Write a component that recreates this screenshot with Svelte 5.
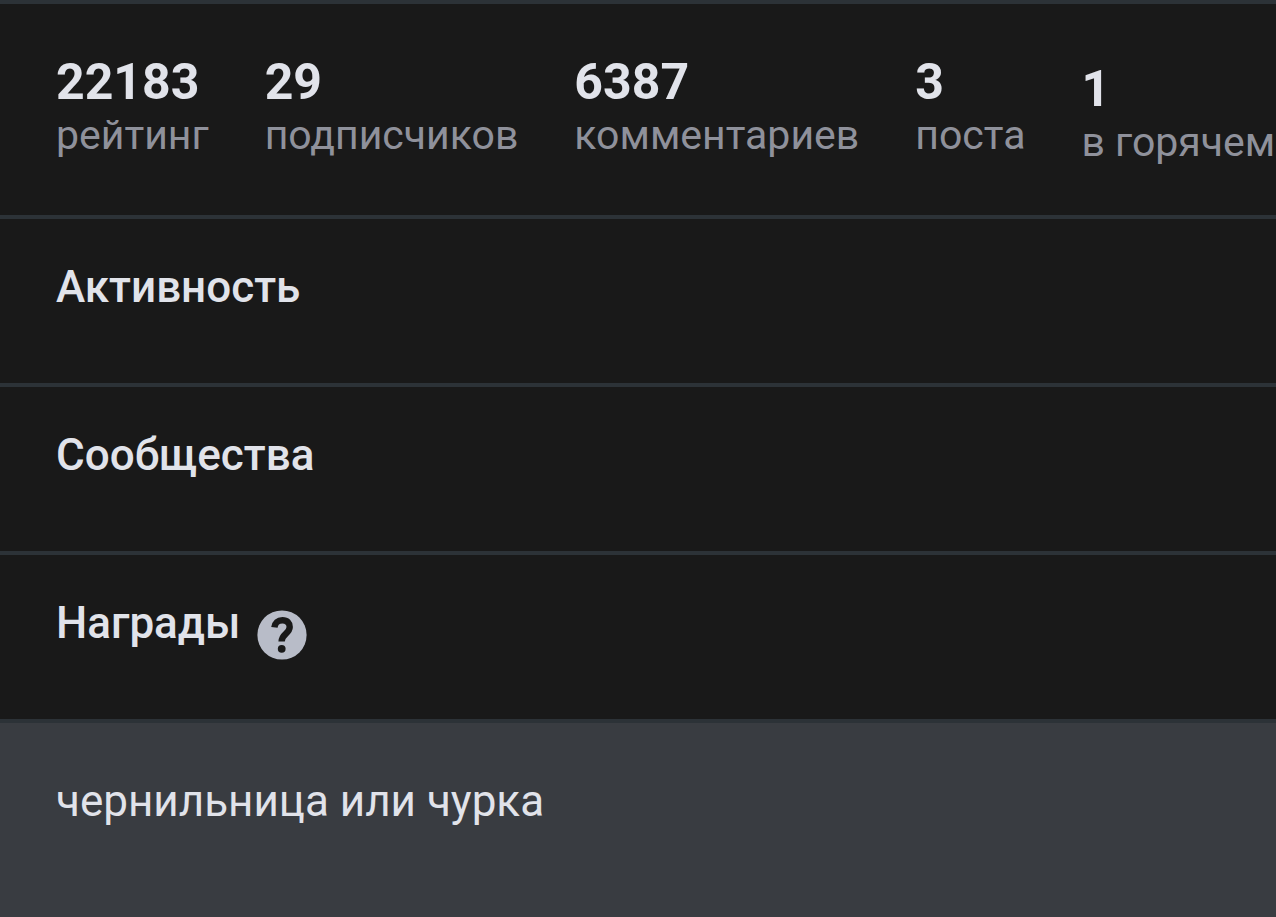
<script>
    const stats = [
        { value: '22183', label: 'рейтинг' },
        { value: '29', label: 'подписчиков' },
        { value: '6387', label: 'комментариев' },
        { value: '3', label: 'поста' },
        { value: '1', label: 'в горячем', hot: true }
    ];
    const note = 'чернильница или чурка';
</script>

<svelte:head>
    <title>Профиль</title>
</svelte:head>

<main>
    <section class="stats">
        {#each stats as stat}
            <div class="stat" class:hot={stat.hot}>
                <b>{stat.value}</b>
                <span>{stat.label}</span>
            </div>
        {/each}
    </section>
    <section>
        <h2>Активность</h2>
    </section>
    <section>
        <h2>Сообщества</h2>
    </section>
    <section class="awards">
        <h2>Награды</h2>
        <button type="button" aria-label="Подробнее о наградах">
            <svg viewBox="0 0 50 50" aria-hidden="true">
                <circle cx="25" cy="25" r="24.6" fill="#b8bcc8" />
                <path d="M17.4 17.4C17.8 12.8 21 10.2 25.4 10.2C30.2 10.2 32.7 13 32.7 17C32.7 23.6 24.6 23.6 24.6 31.6" fill="none" stroke="#191919" stroke-width="6.4" />
                <circle cx="24.7" cy="38.8" r="3.9" fill="#191919" />
            </svg>
        </button>
    </section>
    <section class="note">
        <p>{note}</p>
    </section>
</main>

<style>
    :global(body){
        margin: 0;
        background-color: #393c41;
    }
    main{
        font-family: Roboto, sans-serif;
        color: #e1e3ea;
        overflow: hidden;
    }
    section{
        box-sizing: border-box;
        min-height: 168px;
        padding: 40px 56px;
        border-top: 4px solid #2c3237;
        background-color: #191919;
    }
    .stats{
        display: flex;
        gap: 56px;
        min-height: 215px;
        padding-top: 48px;
    }
    .stat{
        display: flex;
        flex-direction: column;
        flex-shrink: 0;
        white-space: nowrap;
    }
    .hot{
        padding-top: 7px;
    }
    .stat b{
        font-size: 50px;
        font-weight: 700;
        line-height: 60px;
    }
    .stat span{
        color: #8f919b;
        font-size: 41px;
        line-height: 46px;
    }
    h2{
        margin: 0;
        font-size: 44px;
        font-weight: 500;
        line-height: 56px;
    }
    .awards{
        display: flex;
        align-items: flex-start;
        gap: 17px;
    }
    button{
        width: 50px;
        height: 50px;
        margin-top: 15px;
        padding: 0;
        border: none;
        background: none;
    }
    svg{
        display: block;
        width: 100%;
        height: 100%;
    }
    .note{
        min-height: 198px;
        padding-top: 50px;
        background-color: #393c41;
    }
    p{
        margin: 0;
        font-size: 44px;
        line-height: 56px;
    }
</style>
